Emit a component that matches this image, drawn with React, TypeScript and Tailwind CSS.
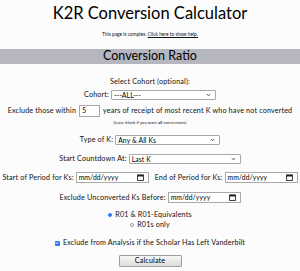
const font = { fontFamily: "Lato, 'Open Sans', sans-serif" };

function Select({ value, width }: { value: string; width: string }) {
  return (
    <div
      className={`flex h-[10px] shrink-0 items-center justify-between rounded-[1px] border border-[#a9a9a9] bg-white pl-[2px] pr-[4px] ${width}`}
    >
      <span className="text-[6.8px] leading-none tracking-[0.1px] text-black">{value}</span>
      <svg width="5" height="4" viewBox="0 0 5 4">
        <path d="M0.8 1 L2.5 2.8 L4.2 1" fill="none" stroke="#444" strokeWidth="0.9" />
      </svg>
    </div>
  );
}

function DateInput() {
  return (
    <div className="flex h-[11px] w-[73px] shrink-0 items-center justify-between border border-[#a9a9a9] bg-white pl-[2px] pr-[4px]">
      <span className="text-[6.8px] leading-none tracking-[0.1px] text-black">mm/dd/yyyy</span>
      <svg width="7" height="7" viewBox="0 0 7 7">
        <rect x="0.6" y="0.9" width="5.8" height="5.5" fill="none" stroke="#222" strokeWidth="0.9" />
        <rect x="0.6" y="0.9" width="5.8" height="1.6" fill="#222" />
      </svg>
    </div>
  );
}

export default function App() {
  return (
    <div className="h-[271px] w-[300px] overflow-hidden bg-[#fcfcfc] text-[#111]" style={font}>
      {/* Header */}
      <h1 className="pt-[3px] text-center text-[16.5px] font-normal leading-[20px] text-black">
        K2R Conversion Calculator
      </h1>
      <p className="mt-[8px] text-center text-[4.8px] leading-[6px]">
        This page is complex. <span className="underline">Click here to show help.</span>
      </p>

      {/* Section bar */}
      <div className="mt-[12px] flex h-[15px] items-center justify-center bg-[#b6b6c1]">
        <span className="text-[12.5px] font-normal leading-none text-black">Conversion Ratio</span>
      </div>

      <div className="flex flex-col items-center whitespace-nowrap text-[7.2px] leading-[8px] tracking-[0.15px]">
        <p className="mt-[14px]">Select Cohort (optional):</p>
        <div className="mt-[4px] flex items-center gap-[2px]">
          <span>Cohort:</span>
          <Select value="---ALL---" width="w-[105px]" />
        </div>

        <div className="mt-[5px] flex items-center gap-[3px]">
          <span>Exclude those within</span>
          <div className="flex h-[12px] w-[21px] shrink-0 items-center border border-[#a9a9a9] bg-white pl-[2px]">5</div>
          <span>years of receipt of most recent K who have not converted</span>
        </div>
        <p className="mt-[3px] text-[4px] leading-[5px] tracking-[0.1px]">
          (leave blank if you want <b>all</b> conversions)
        </p>

        <div className="mt-[10px] flex items-center gap-[2px]">
          <span>Type of K:</span>
          <Select value="Any & All Ks" width="w-[105px]" />
        </div>

        <div className="mt-[9px] flex items-center gap-[2px]">
          <span>Start Countdown At:</span>
          <Select value="Last K" width="w-[112px]" />
        </div>

        <div className="mt-[8px] flex items-center">
          <span className="mr-[2px]">Start of Period for Ks:</span>
          <DateInput />
          <span className="ml-[6px] mr-[2px]">End of Period for Ks:</span>
          <DateInput />
        </div>

        <div className="mt-[9px] flex items-center gap-[2px]">
          <span>Exclude Unconverted Ks Before:</span>
          <DateInput />
        </div>

        <div className="mt-[8px] flex flex-col items-center gap-[2px]">
          <label className="flex items-center gap-[3px]">
            <span className="h-[4px] w-[4px] rounded-full border-[1.2px] border-[#2b7bef] bg-[#2b7bef]" />
            R01 &amp; R01-Equivalents
          </label>
          <label className="flex items-center gap-[3px]">
            <span className="h-[4px] w-[4px] rounded-full border-[0.8px] border-[#999] bg-white" />
            R01s only
          </label>
        </div>

        <label className="mt-[10px] flex items-center gap-[3px]">
          <span className="flex h-[5px] w-[5px] items-center justify-center rounded-[1px] bg-[#2b7bef]">
            <svg width="4" height="4" viewBox="0 0 4 4">
              <path d="M0.7 2 L1.6 3 L3.3 0.9" fill="none" stroke="#fff" strokeWidth="0.8" />
            </svg>
          </span>
          Exclude from Analysis if the Scholar Has Left Vanderbilt
        </label>

        <button className="mt-[8px] h-[12px] w-[63px] rounded-[1px] border border-[#a0a0a0] bg-gradient-to-b from-[#f8f8f8] to-[#dcdcdc] text-[7.2px] leading-none text-black">
          Calculate
        </button>
      </div>
    </div>
  );
}
